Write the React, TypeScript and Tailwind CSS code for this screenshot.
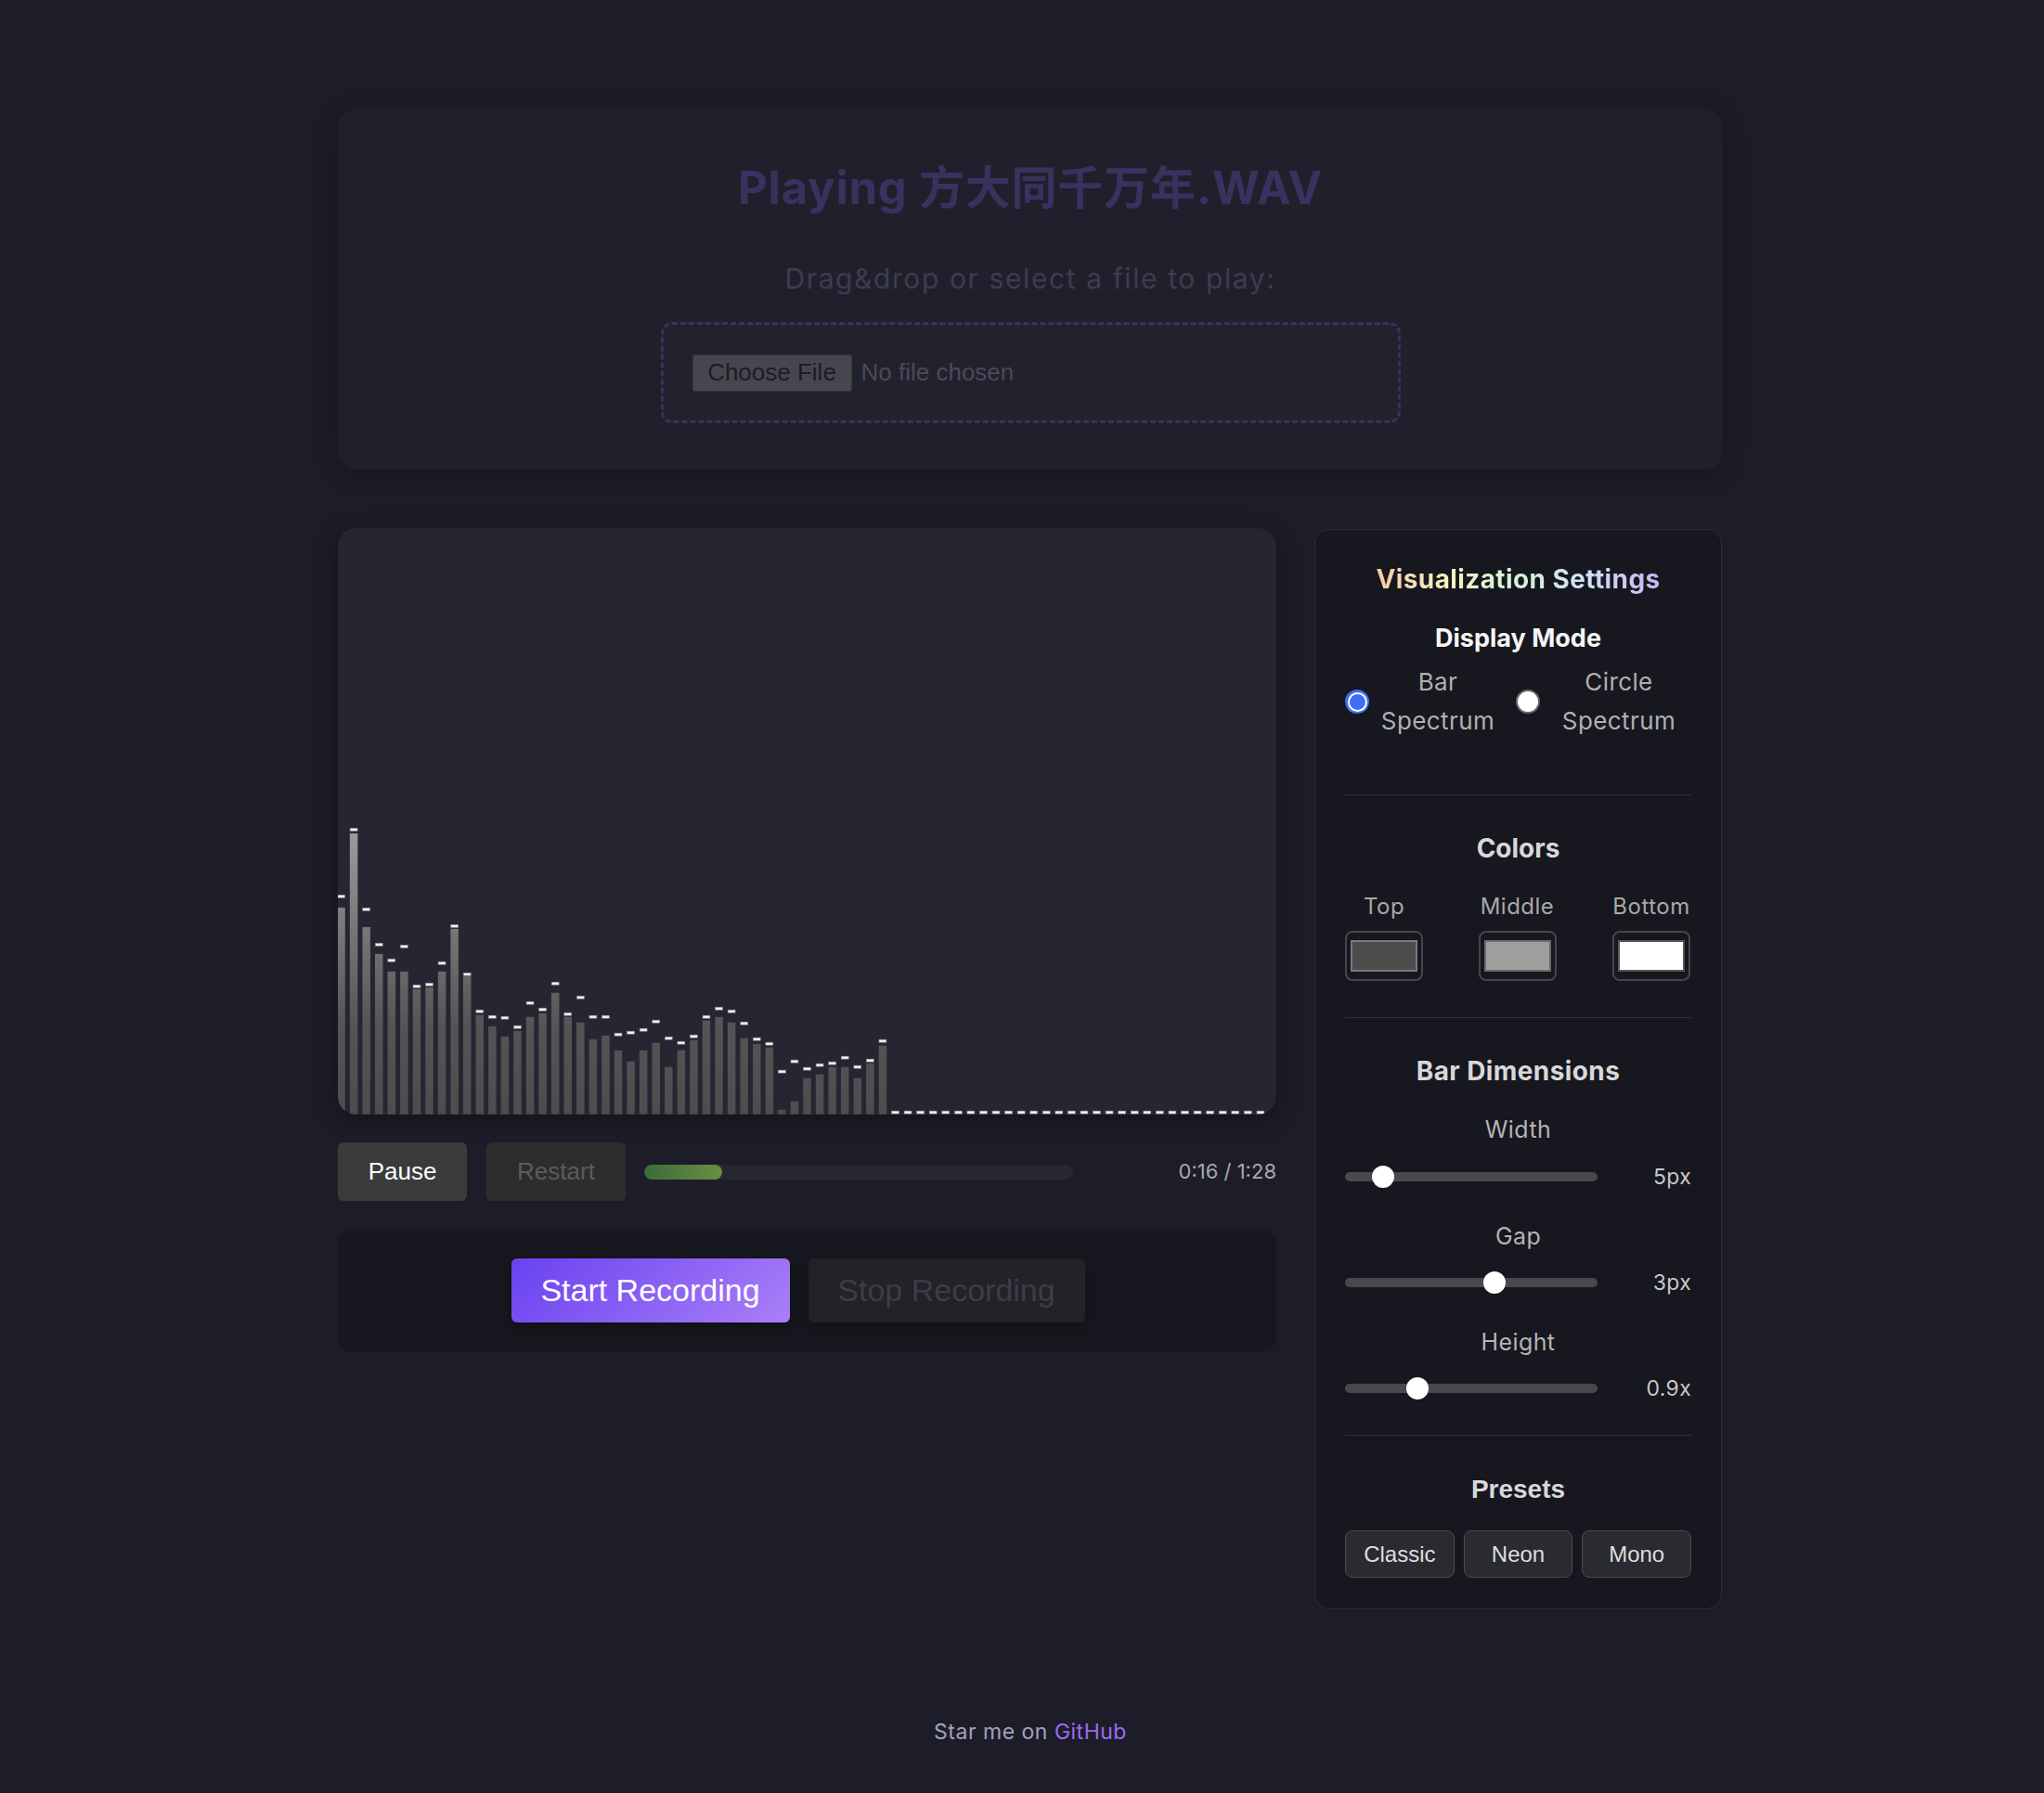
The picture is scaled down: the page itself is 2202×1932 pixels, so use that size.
import React from "react";

const BARS: [number, number][] = [
  [223, 233], [303, 305], [202, 219], [173, 181], [154, 164], [154, 179], [135, 136], [137, 138],
  [154, 161], [200, 201], [149, 149], [107, 109], [95, 103], [84, 102], [90, 92], [105, 118],
  [109, 111], [131, 139], [105, 106], [99, 124], [81, 103], [85, 103], [69, 84], [57, 86],
  [69, 89], [77, 98], [51, 80], [69, 75], [80, 82], [101, 103], [105, 112], [99, 109],
  [82, 96], [76, 79], [72, 74], [5, 44], [14, 55], [39, 47], [43, 51], [51, 53],
  [51, 59], [39, 49], [55, 56], [74, 77],
];
const TOTAL = 74;

function Spectrum() {
  const H = 632;
  const items = [];
  for (let i = 0; i < TOTAL; i++) {
    const [h, c] = BARS[i] ?? [0, 0];
    const x = -0.7 + i * 13.58;
    items.push(
      <g key={i}>
        {h > 0 && <rect x={x} y={H - h} width={8.5} height={h} fill="url(#barGrad)" />}
        <rect x={x + 0.3} y={H - c - 3.6} width={7.9} height={3} fill="#f4f4f4" stroke="#8a8a8a" strokeWidth={0.6} />
      </g>
    );
  }
  return (
    <svg width="1012" height={H} viewBox={`0 0 1012 ${H}`} className="block">
      <defs>
        <linearGradient id="barGrad" gradientUnits="userSpaceOnUse" x1="0" y1={H} x2="0" y2="0">
          <stop offset="0" stopColor="#4d4d4d" />
          <stop offset="0.15" stopColor="#545454" />
          <stop offset="0.5" stopColor="#9e9e9e" />
          <stop offset="1" stopColor="#ffffff" />
        </linearGradient>
      </defs>
      {items}
    </svg>
  );
}

function Slider({ label, value, pos, mt, mt2 }: { label: string; value: string; pos: number; mt: string; mt2: string }) {
  return (
    <>
      <div className={`${mt} text-center text-[25px] leading-[32px] tracking-[0.4px] text-[#b4b4b4]`}>{label}</div>
      <div className={`${mt2} flex h-[24px] items-center justify-between`}>
        <div className="relative h-[10px] w-[272px] rounded-full bg-[#48484f]">
          <div
            className="absolute top-1/2 h-[24px] w-[24px] -translate-x-1/2 -translate-y-1/2 rounded-full bg-white"
            style={{ left: pos }}
          />
        </div>
        <div className="text-[23px] tracking-[0.3px] text-[#c8c8c8]">{value}</div>
      </div>
    </>
  );
}

function Swatch({ label, fill, border, w }: { label: string; fill: string; border: string; w: string }) {
  return (
    <div className={`flex ${w} flex-col items-center`}>
      <div className="whitespace-nowrap text-[24px] leading-[32px] tracking-[0.5px] text-[#a8a8a8]">{label}</div>
      <div className="mt-[10px] h-[54px] w-[84px] rounded-[8px] border-2 border-[#45454d] bg-[#17171f] px-[4px] py-[8px]">
        <div className={`h-full w-full border-2 ${fill} ${border}`} />
      </div>
    </div>
  );
}

export default function App() {
  return (
    <div className="min-h-[1932px] bg-[#1d1d29] pt-[117px] font-['Inter','Noto_Sans_CJK_SC',sans-serif]">
      <div className="ml-[364px] w-[1492px]">
        {/* Top card */}
        <section className="flex flex-col items-center rounded-[20px] bg-[#20202c] pb-[50px] pt-[50px] shadow-[0_4px_24px_rgba(0,0,0,0.25)]">
          <h1 className="text-[49px] font-bold leading-[72px] tracking-[0.8px] text-[#3a315f]">Playing 方大同千万年.WAV</h1>
          <p className="mt-[40px] text-[30px] leading-[42px] tracking-[1.6px] text-[#3d3d4c]">Drag&amp;drop or select a file to play:</p>
          <div className="mt-[26px] flex h-[109px] w-[797px] items-center rounded-[12px] border-[3px] border-dashed border-[#3a3160] bg-[#22222e] pl-[31px] font-['Liberation_Sans',Arial,sans-serif]">
            <div className="flex h-[40px] w-[172px] items-center justify-center rounded-[3px] border border-[#35353d] bg-[#46464f] text-[26px] text-[#1c1c24]">
              Choose File
            </div>
            <span className="ml-[10px] text-[26px] text-[#4a4a58]">No file chosen</span>
          </div>
        </section>

        <div className="mt-[63px] flex items-start gap-[41px]">
          {/* Left column */}
          <div className="w-[1011px]">
            <div className="flex h-[632px] items-end overflow-hidden rounded-[20px] bg-[#262633] shadow-[0_6px_24px_rgba(0,0,0,0.35)]">
              <Spectrum />
            </div>

            <div className="mt-[30px] flex h-[63px] items-center font-['Liberation_Sans',Arial,sans-serif]">
              <div className="flex h-[63px] w-[139px] items-center justify-center rounded-[6px] bg-[#3b3b3b] text-[26px] text-white">
                Pause
              </div>
              <div className="ml-[21px] flex h-[63px] w-[150px] items-center justify-center rounded-[6px] bg-[#2d2d2d] text-[26px] text-[#5c5c5c]">
                Restart
              </div>
              <div className="ml-[20px] h-[16px] w-[462px] overflow-hidden rounded-full bg-[#27272f]">
                <div className="h-full w-[84px] rounded-full bg-[linear-gradient(90deg,#3e6a3b,#6b8f40)]" />
              </div>
              <div className="ml-auto font-['Inter',sans-serif] text-[22px] text-[#a8a8a8]">0:16 / 1:28</div>
            </div>

            <div className="mt-[30px] flex h-[133px] items-center justify-center gap-[20px] rounded-[16px] bg-[#17171f] pr-[20px] font-['Liberation_Sans',Arial,sans-serif]">
              <div className="flex h-[69px] w-[300px] items-center justify-center rounded-[6px] bg-[linear-gradient(135deg,#6a42f0,#a97ff8)] text-[34px] text-white shadow-[0_6px_16px_rgba(0,0,0,0.35)]">
                Start Recording
              </div>
              <div className="flex h-[69px] w-[298px] items-center justify-center rounded-[6px] bg-[#222229] text-[34px] text-[#3d3d46] shadow-[0_6px_16px_rgba(0,0,0,0.3)]">
                Stop Recording
              </div>
            </div>
          </div>

          {/* Settings */}
          <aside className="mt-[1px] w-[439px] rounded-[16px] border border-[#2e2e38] bg-[#17171f] px-[32px] pb-[33px] pt-[33px]">
            <div className="text-center text-[28px] font-bold leading-[40px] tracking-[0.4px]">
              <span className="bg-[linear-gradient(90deg,#f9c8a6,#f3f3c0,#d3f4d8,#cfe0f8,#cbb2f0)] bg-clip-text text-transparent">
                Visualization Settings
              </span>
            </div>
            <div className="mt-[26px] text-center text-[27px] font-bold leading-[36px] text-[#f5f5f5]">Display Mode</div>
            <div className="mt-[8px] flex items-center">
              <div className="flex h-[26px] w-[26px] items-center justify-center rounded-full bg-[#3d6ef5]">
                <div className="flex h-[21px] w-[21px] items-center justify-center rounded-full bg-white">
                  <div className="h-[17px] w-[17px] rounded-full bg-[#3d6ef5]" />
                </div>
              </div>
              <div className="ml-[4px] w-[140px] text-center text-[26px] leading-[42px] tracking-[0.4px] text-[#b0b0b0]">
                Bar
                <br />
                Spectrum
              </div>
              <div className="ml-[14px] h-[26px] w-[26px] rounded-full border-2 border-[#6a6a6a] bg-white" />
              <div className="ml-[15px] w-[140px] text-center text-[26px] leading-[42px] tracking-[0.4px] text-[#b0b0b0]">
                Circle
                <br />
                Spectrum
              </div>
            </div>

            <div className="mt-[58px] h-px bg-[#30303a]" />

            <div className="mt-[39px] text-center text-[28px] font-bold leading-[36px] text-[#d8d8d8]">Colors</div>
            <div className="mt-[29px] flex justify-between">
              <Swatch label="Top" fill="bg-[#4d4d4d]" border="border-[#7a7a7a]" w="w-[84px]" />
              <Swatch label="Middle" fill="bg-[#9e9e9e]" border="border-[#6b6b6b]" w="w-[84px]" />
              <Swatch label="Bottom" fill="bg-white" border="border-[#555555]" w="w-[86px]" />
            </div>

            <div className="mt-[39px] h-px bg-[#30303a]" />

            <div className="mt-[39px] text-center text-[28px] font-bold leading-[36px] tracking-[0.4px] text-[#d8d8d8]">Bar Dimensions</div>
            <Slider label="Width" value="5px" pos={41} mt="mt-[29px]" mt2="mt-[23px]" />
            <Slider label="Gap" value="3px" pos={161} mt="mt-[36px]" mt2="mt-[22px]" />
            <Slider label="Height" value="0.9x" pos={78} mt="mt-[36px]" mt2="mt-[22px]" />

            <div className="mt-[38px] h-px bg-[#30303a]" />

            <div className="mt-[40px] text-center font-['Liberation_Sans',Arial,sans-serif] text-[28px] font-bold leading-[36px] text-[#d8d8d8]">
              Presets
            </div>
            <div className="mt-[26px] flex gap-[10px] font-['Liberation_Sans',Arial,sans-serif]">
              {["Classic", "Neon", "Mono"].map((p) => (
                <div
                  key={p}
                  className="flex h-[51px] flex-1 items-center justify-center rounded-[8px] border-[1.5px] border-[#4b4b52] bg-[#2a2a31] text-[24px] text-[#dedede]"
                >
                  {p}
                </div>
              ))}
            </div>
          </aside>
        </div>

        <div className="mt-[116px] text-center text-[23px] leading-[33px] tracking-[0.5px] text-[#a3a3b8]">
          Star me on <span className="text-[#9a6cf2]">GitHub</span>
        </div>
      </div>
    </div>
  );
}
